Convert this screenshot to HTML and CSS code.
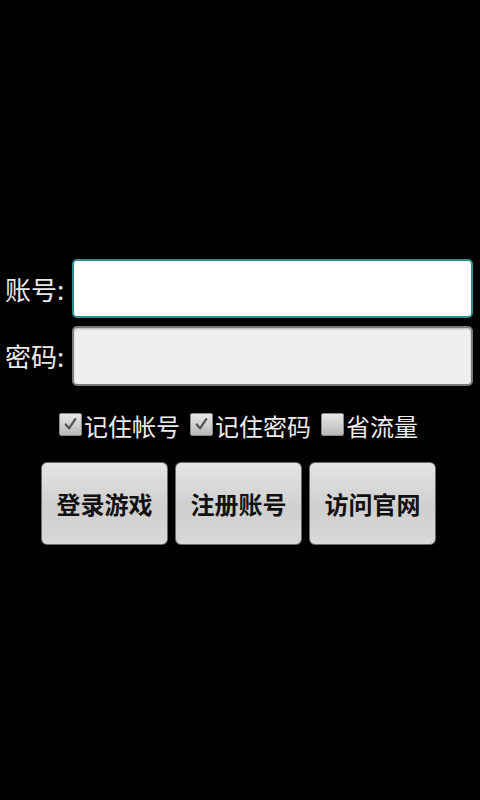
FILE: index.html
```html
<!DOCTYPE html>
<html>
<head>
<meta charset="utf-8">
<link rel="stylesheet" href="styles.css">
</head>
<body>
<div class="page">
  <div class="form">
    <div class="row">
      <span class="label">账号:</span>
      <div class="input focused"></div>
    </div>
    <div class="row">
      <span class="label">密码:</span>
      <div class="input"></div>
    </div>
  </div>
  <div class="checks">
    <label class="check"><span class="box"><svg viewBox="0 0 22 22" width="22" height="22"><path d="M6 11.5 L9.5 15.5 L16 6" fill="none" stroke="#555" stroke-width="2.4" stroke-linecap="round" stroke-linejoin="round"/></svg></span><span class="ctext">记住帐号</span></label>
    <label class="check"><span class="box"><svg viewBox="0 0 22 22" width="22" height="22"><path d="M6 11.5 L9.5 15.5 L16 6" fill="none" stroke="#555" stroke-width="2.4" stroke-linecap="round" stroke-linejoin="round"/></svg></span><span class="ctext">记住密码</span></label>
    <label class="check"><span class="box"></span><span class="ctext">省流量</span></label>
  </div>
  <div class="buttons">
    <div class="btn">登录游戏</div>
    <div class="btn">注册账号</div>
    <div class="btn">访问官网</div>
  </div>
</div>
</body>
</html>
```
FILE: styles.css
```css
html, body {
  margin: 0;
  padding: 0;
  background: #000;
}
body {
  width: 480px;
  height: 800px;
  overflow: hidden;
  font-family: "Noto Sans CJK SC", "Noto Sans", sans-serif;
  color: #e8e8e8;
}
.page {
  display: flex;
  flex-direction: column;
  padding-top: 259px;
}
.form {
  display: flex;
  flex-direction: column;
  gap: 8px;
  padding-right: 7px;
}
.row {
  display: flex;
  align-items: center;
}
.label {
  width: 67px;
  padding-left: 5px;
  font-size: 26px;
  line-height: 30px;
  white-space: nowrap;
}
.input {
  flex: 1;
  height: 56px;
  border: 2px solid #7a7a7a;
  border-radius: 5px;
  background: #efefef;
  box-shadow: inset 0 1px 2px rgba(0,0,0,0.25);
}
.input.focused {
  height: 55px;
  background: #fff;
  border-color: #2f8f8c;
  box-shadow: none;
}
.checks {
  display: flex;
  justify-content: center;
  align-items: center;
  gap: 10px;
  margin-top: 24px;
  height: 32px;
  padding-right: 3px;
}
.check {
  display: flex;
  align-items: center;
}
.box {
  width: 21px;
  height: 21px;
  border: 1px solid #8a8a8a;
  border-radius: 2px;
  background: linear-gradient(#e8e8e8, #b8b8b8);
  margin-right: 2px;
  display: flex;
  align-items: center;
  justify-content: center;
  position: relative;
  top: -2px;
}
.box svg {
  display: block;
}
.ctext {
  font-size: 24px;
  line-height: 32px;
  color: #ececec;
}
.buttons {
  display: flex;
  justify-content: center;
  gap: 7px;
  margin-top: 20px;
  padding-right: 3px;
}
.btn {
  width: 125px;
  height: 81px;
  border: 1px solid #6a6a6a;
  border-radius: 6px;
  background: linear-gradient(#e4e4e4, #cfcfcf 55%, #d9d9d9);
  color: #111;
  font-size: 24px;
  font-weight: bold;
  display: flex;
  align-items: center;
  justify-content: center;
}
```
